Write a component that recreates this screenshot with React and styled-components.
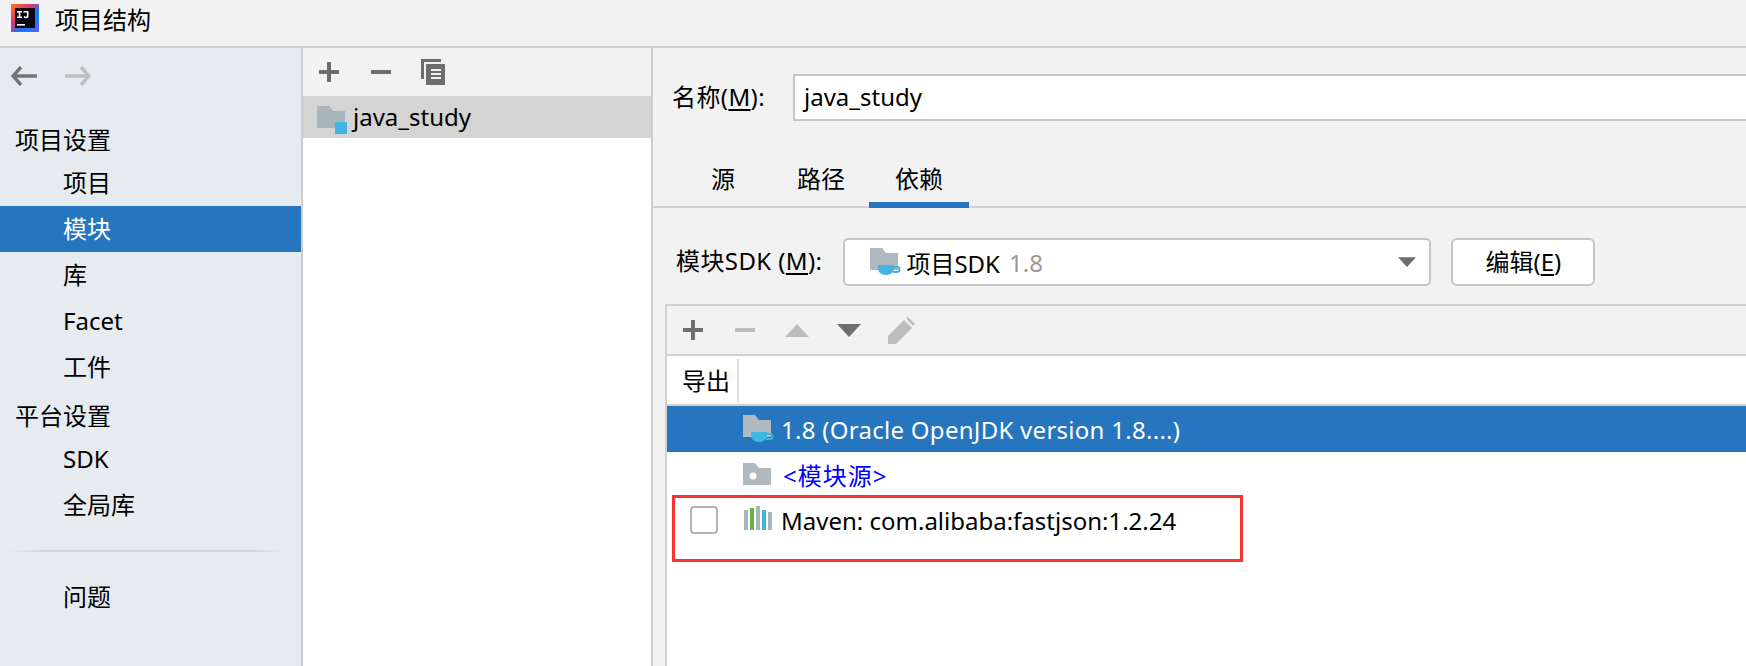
import React from 'react';
import styled, { createGlobalStyle } from 'styled-components';

const GlobalStyle = createGlobalStyle`
    html, body {
        margin: 0;
        padding: 0;
        background: #f2f2f2;
    }
    body {
        font-family: "Noto Sans", "Noto Sans CJK SC", sans-serif;
        font-size: 24px;
        color: #000;
        overflow: hidden;
    }
`;

const Window = styled.div`
    width: 1746px;
    height: 666px;
    display: flex;
    flex-direction: column;
    overflow: hidden;
`;

const TitleBar = styled.div`
    height: 48px;
    flex: none;
    display: flex;
    align-items: flex-start;
    padding: 4px 0 0 11px;
    box-sizing: border-box;
    background: #f2f2f2;
    border-bottom: 2px solid #cdcdcd;
`;

const TitleText = styled.span`
    margin-left: 16px;
    font-size: 24px;
    line-height: 32px;
`;

const Body = styled.div`
    flex: 1;
    display: flex;
    min-height: 0;
`;

const Sidebar = styled.nav`
    width: 303px;
    flex: none;
    box-sizing: border-box;
    background: #e6ebf0;
    border-right: 2px solid #cdcdcd;
    padding-top: 18px;
`;

const NavArrows = styled.div`
    display: flex;
    gap: 28px;
    padding-left: 11px;
    height: 26px;
    margin-bottom: 22px;
`;

const SectionTitle = styled.div`
    padding-left: 15px;
    height: 46px;
    line-height: 52px;
`;

const NavItem = styled.div`
    padding-left: 63px;
    height: 46px;
    line-height: 46px;
    background: ${p => (p.$selected ? '#2675bf' : 'transparent')};
    color: ${p => (p.$selected ? '#fff' : '#000')};
`;

const NavDivider = styled.div`
    height: 2px;
    margin: 22px 14px 22px 8px;
    background: linear-gradient(90deg, #e6ebf0, #d6d8da 12%, #d6d8da 88%, #e6ebf0);
`;

const ListPanel = styled.div`
    width: 350px;
    flex: none;
    box-sizing: border-box;
    background: #fff;
    border-right: 2px solid #cdcdcd;
`;

const IconBar = styled.div`
    height: 48px;
    background: #f2f2f2;
    display: flex;
    align-items: center;
    border-bottom: ${p => (p.$ruled ? '2px solid #d1d1d1' : 'none')};
`;

const IconSlot = styled.span`
    width: 52px;
    flex: none;
    display: flex;
    justify-content: center;
    align-items: center;
`;

const ListRow = styled.div`
    height: 42px;
    background: #d4d4d4;
    display: flex;
    align-items: center;
    padding-left: 14px;
    gap: 5px;
`;

const ListIcon = styled.span`
    display: flex;
    margin-top: 6px;
`;

const ListName = styled.span`
    margin-bottom: 2px;
`;

const Content = styled.div`
    flex: 1;
    min-width: 0;
    background: #f2f2f2;
    display: flex;
    flex-direction: column;
`;

const NameRow = styled.div`
    height: 74px;
    display: flex;
    align-items: flex-start;
    padding: 26px 0 0 19px;
    gap: 28px;
`;

const FieldLabel = styled.label`
    line-height: 46px;
    white-space: nowrap;
    letter-spacing: 0.4px;
`;

const NameInput = styled.div`
    flex: 1;
    height: 47px;
    box-sizing: border-box;
    background: #fff;
    border: 2px solid #c6c6c6;
    border-right: none;
    padding-left: 9px;
    line-height: 41px;
`;

const Tabs = styled.div`
    height: 58px;
    box-sizing: border-box;
    display: flex;
    padding-left: 16px;
    margin-top: 2px;
    border-bottom: 2px solid #d1d1d1;
`;

const Tab = styled.div`
    width: ${p => p.$w}px;
    padding-right: ${p => p.$nudge || 0}px;
    text-align: center;
    height: 58px;
    box-sizing: border-box;
    line-height: 58px;
    border-bottom: ${p => (p.$active ? '6px solid #2675bf' : 'none')};
`;

const SdkRow = styled.div`
    height: 48px;
    margin-top: 30px;
    display: flex;
    padding-left: 23px;
`;

const SdkSelect = styled.div`
    width: 588px;
    margin-left: 21px;
    box-sizing: border-box;
    background: #fff;
    border: 2px solid #c6c6c6;
    border-radius: 5px;
    display: flex;
    align-items: center;
    padding: 0 13px 0 25px;
    gap: 5px;
`;

const Muted = styled.span`
    color: #999;
    margin-left: 4px;
`;

const CaretWrap = styled.div`
    margin-left: auto;
    display: flex;
`;

const EditButton = styled.div`
    width: 144px;
    margin-left: 20px;
    box-sizing: border-box;
    background: #fff;
    border: 2px solid #c6c6c6;
    border-radius: 6px;
    text-align: center;
    line-height: 44px;
`;

const TablePanel = styled.div`
    position: relative;
    flex: 1;
    margin: 18px 0 0 12px;
    background: #fff;
    border-top: 2px solid #d1d1d1;
    border-left: 2px solid #d1d1d1;
`;

const TableHeader = styled.div`
    height: 48px;
    border-bottom: 2px solid #d1d1d1;
    display: flex;
    align-items: center;
`;

const ExportHead = styled.div`
    width: 72px;
    height: 44px;
    margin-top: 2px;
    box-sizing: border-box;
    padding-left: 15px;
    line-height: 44px;
    border-right: 2px solid #e0e0e0;
`;

const DepRow = styled.div`
    height: ${p => p.$h}px;
    display: flex;
    align-items: center;
    padding-left: 76px;
    gap: 7px;
    background: ${p => (p.$selected ? '#2675bf' : 'transparent')};
    color: ${p => p.$color || '#000'};
`;

const MavenRow = styled(DepRow)`
    padding-left: 23px;
`;

const CheckBox = styled.span`
    width: 28px;
    height: 28px;
    flex: none;
    box-sizing: border-box;
    background: #fff;
    border: 2px solid #b4b4b4;
    border-radius: 4px;
    margin-right: 19px;
`;

const LibraryWrap = styled.span`
    display: flex;
    margin-bottom: 4px;
`;

const SdkName = styled.span`
    letter-spacing: 0.28px;
`;

const SourceText = styled.span`
    padding-left: 2px;
    letter-spacing: 1px;
`;

const Highlight = styled.div`
    position: absolute;
    left: 5px;
    top: 189px;
    width: 571px;
    height: 67px;
    box-sizing: border-box;
    border: 3px solid #f83333;
    pointer-events: none;
`;

const Mnemonic = styled.span`
    text-decoration: underline;
    text-underline-offset: 3px;
    text-decoration-thickness: 2px;
`;

const AppLogo = () => (
    <svg width="28" height="28" viewBox="0 0 28 28">
        <defs>
            <linearGradient id="logoEdge" x1="0" y1="0" x2="1" y2="1">
                <stop offset="0" stopColor="#f97a12" />
                <stop offset="0.35" stopColor="#e8346e" />
                <stop offset="0.65" stopColor="#087cfa" />
                <stop offset="1" stopColor="#6b57ff" />
            </linearGradient>
        </defs>
        <rect width="28" height="28" fill="url(#logoEdge)" />
        <rect x="4" y="4" width="20" height="20" fill="#0a0210" />
        <path d="M6 7h5v1.4H9.300v4.200H11V14H6v-1.400h1.700V8.400H6zM12.500 7h5v5.500c0 1-.8 1.700-2.300 1.700-1.200 0-2.200-.5-2.700-1.300l1-.9c.4.500.9.800 1.500.8.600 0 .9-.3.9-.8V8.400h-3.400z" fill="#fff" />
        <rect x="6" y="20" width="8" height="1.600" fill="#fff" />
    </svg>
);

const ArrowLeft = ({ color }) => (
    <svg width="26" height="20" viewBox="0 0 26 20">
        <path d="M10 1 2 10l8 9M3 10h23" fill="none" stroke={color} strokeWidth="3.400" />
    </svg>
);

const ArrowRight = ({ color }) => (
    <svg width="26" height="20" viewBox="0 0 26 20">
        <path d="M16 1l8 9-8 9M23 10H0" fill="none" stroke={color} strokeWidth="3.400" />
    </svg>
);

const PlusIcon = ({ color = '#6e6e6e' }) => (
    <svg width="20" height="20" viewBox="0 0 20 20">
        <path d="M0 8h8V0h4v8h8v4h-8v8H8v-8H0z" fill={color} />
    </svg>
);

const MinusIcon = ({ color = '#6e6e6e' }) => (
    <svg width="20" height="20" viewBox="0 0 20 20">
        <rect y="8" width="20" height="4" fill={color} />
    </svg>
);

const CopyIcon = () => (
    <svg width="24" height="26" viewBox="0 0 24 26">
        <path d="M0 0h20v3H3v17H0z" fill="#6e6e6e" />
        <path d="M5 5h19v21H5z" fill="#6e6e6e" />
        <path d="M10 10h10v2H10zM10 14h10v2H10zM10 18h10v2H10z" fill="#f2f2f2" />
    </svg>
);

const TriangleUp = ({ color }) => (
    <svg width="24" height="13" viewBox="0 0 24 13">
        <path d="M12 0l12 13H0z" fill={color} />
    </svg>
);

const TriangleDown = ({ color, size = 24 }) => (
    <svg width={size} height={size / 2 + 1} viewBox="0 0 24 13">
        <path d="M0 0h24L12 13z" fill={color} />
    </svg>
);

const PencilIcon = () => (
    <svg width="27" height="27" viewBox="0 0 27 27">
        <path d="M0 27V19L16 3l8 8L8 27zM18 1.500l2-1.500 7 7-2 2z" fill="#bdbdbd" />
    </svg>
);

const ModuleFolder = () => (
    <svg width="31" height="29" viewBox="0 0 31 29">
        <path d="M0 0h12l4 5h12v13H19v4H0z" fill="#a9b5bd" />
        <rect x="18" y="16" width="12" height="12" fill="#40b6e0" />
    </svg>
);

const JdkFolder = () => (
    <svg width="31" height="28" viewBox="0 0 31 28">
        <path d="M0 0h12l4 5h12v17H0z" fill="#afb9c0" />
        <path d="M8 17h16v3c0 4-3 7-8 7s-8-3-8-7z" fill="#40b6e0" />
        <path d="M24 19h3a2 2 0 010 5h-4" fill="none" stroke="#40b6e0" strokeWidth="2" />
    </svg>
);

const SourceFolder = () => (
    <svg width="31" height="22" viewBox="0 0 31 22">
        <path d="M0 0h12l4 5h12v17H0z" fill="#afb9c0" />
        <circle cx="10" cy="13" r="3.500" fill="#fff" />
    </svg>
);

const LibraryIcon = () => (
    <svg width="30" height="24" viewBox="0 0 30 24">
        <rect y="4" width="4" height="20" fill="#a9b5bd" />
        <rect x="6" y="2" width="4" height="22" fill="#62b543" />
        <rect x="12" y="0" width="4" height="24" fill="#a9b5bd" />
        <rect x="18" y="4" width="4" height="20" fill="#40b6e0" />
        <rect x="24" y="6" width="4" height="18" fill="#a9b5bd" />
    </svg>
);

export default function App() {
    return (
        <Window>
            <GlobalStyle />
            <TitleBar>
                <AppLogo />
                <TitleText>项目结构</TitleText>
            </TitleBar>
            <Body>
                <Sidebar>
                    <NavArrows>
                        <ArrowLeft color="#767676" />
                        <ArrowRight color="#c0c0c0" />
                    </NavArrows>
                    <SectionTitle>项目设置</SectionTitle>
                    <NavItem>项目</NavItem>
                    <NavItem $selected>模块</NavItem>
                    <NavItem>库</NavItem>
                    <NavItem>Facet</NavItem>
                    <NavItem>工件</NavItem>
                    <SectionTitle>平台设置</SectionTitle>
                    <NavItem>SDK</NavItem>
                    <NavItem>全局库</NavItem>
                    <NavDivider />
                    <NavItem>问题</NavItem>
                </Sidebar>
                <ListPanel>
                    <IconBar>
                        <IconSlot><PlusIcon /></IconSlot>
                        <IconSlot><MinusIcon /></IconSlot>
                        <IconSlot><CopyIcon /></IconSlot>
                    </IconBar>
                    <ListRow>
                        <ListIcon><ModuleFolder /></ListIcon>
                        <ListName>java_study</ListName>
                    </ListRow>
                </ListPanel>
                <Content>
                    <NameRow>
                        <FieldLabel>名称(<Mnemonic>M</Mnemonic>):</FieldLabel>
                        <NameInput>java_study</NameInput>
                    </NameRow>
                    <Tabs>
                        <Tab $w={108}>源</Tab>
                        <Tab $w={92} $nudge={4}>路径</Tab>
                        <Tab $w={100} $active>依赖</Tab>
                    </Tabs>
                    <SdkRow>
                        <FieldLabel>模块SDK (<Mnemonic>M</Mnemonic>):</FieldLabel>
                        <SdkSelect>
                            <JdkFolder />
                            <span>项目SDK</span>
                            <Muted>1.8</Muted>
                            <CaretWrap><TriangleDown color="#6e6e6e" size={18} /></CaretWrap>
                        </SdkSelect>
                        <EditButton>编辑(<Mnemonic>E</Mnemonic>)</EditButton>
                    </SdkRow>
                    <TablePanel>
                        <IconBar $ruled>
                            <IconSlot><PlusIcon /></IconSlot>
                            <IconSlot><MinusIcon color="#bdbdbd" /></IconSlot>
                            <IconSlot><TriangleUp color="#bdbdbd" /></IconSlot>
                            <IconSlot><TriangleDown color="#6e6e6e" /></IconSlot>
                            <IconSlot><PencilIcon /></IconSlot>
                        </IconBar>
                        <TableHeader>
                            <ExportHead>导出</ExportHead>
                        </TableHeader>
                        <DepRow $h={46} $selected $color="#fff">
                            <JdkFolder />
                            <SdkName>1.8 (Oracle OpenJDK version 1.8....)</SdkName>
                        </DepRow>
                        <DepRow $h={44} $color="#0000ff">
                            <SourceFolder />
                            <SourceText>&lt;模块源&gt;</SourceText>
                        </DepRow>
                        <MavenRow $h={48}>
                            <CheckBox />
                            <LibraryWrap><LibraryIcon /></LibraryWrap>
                            <span>Maven: com.alibaba:fastjson:1.2.24</span>
                        </MavenRow>
                        <Highlight />
                    </TablePanel>
                </Content>
            </Body>
        </Window>
    );
}
